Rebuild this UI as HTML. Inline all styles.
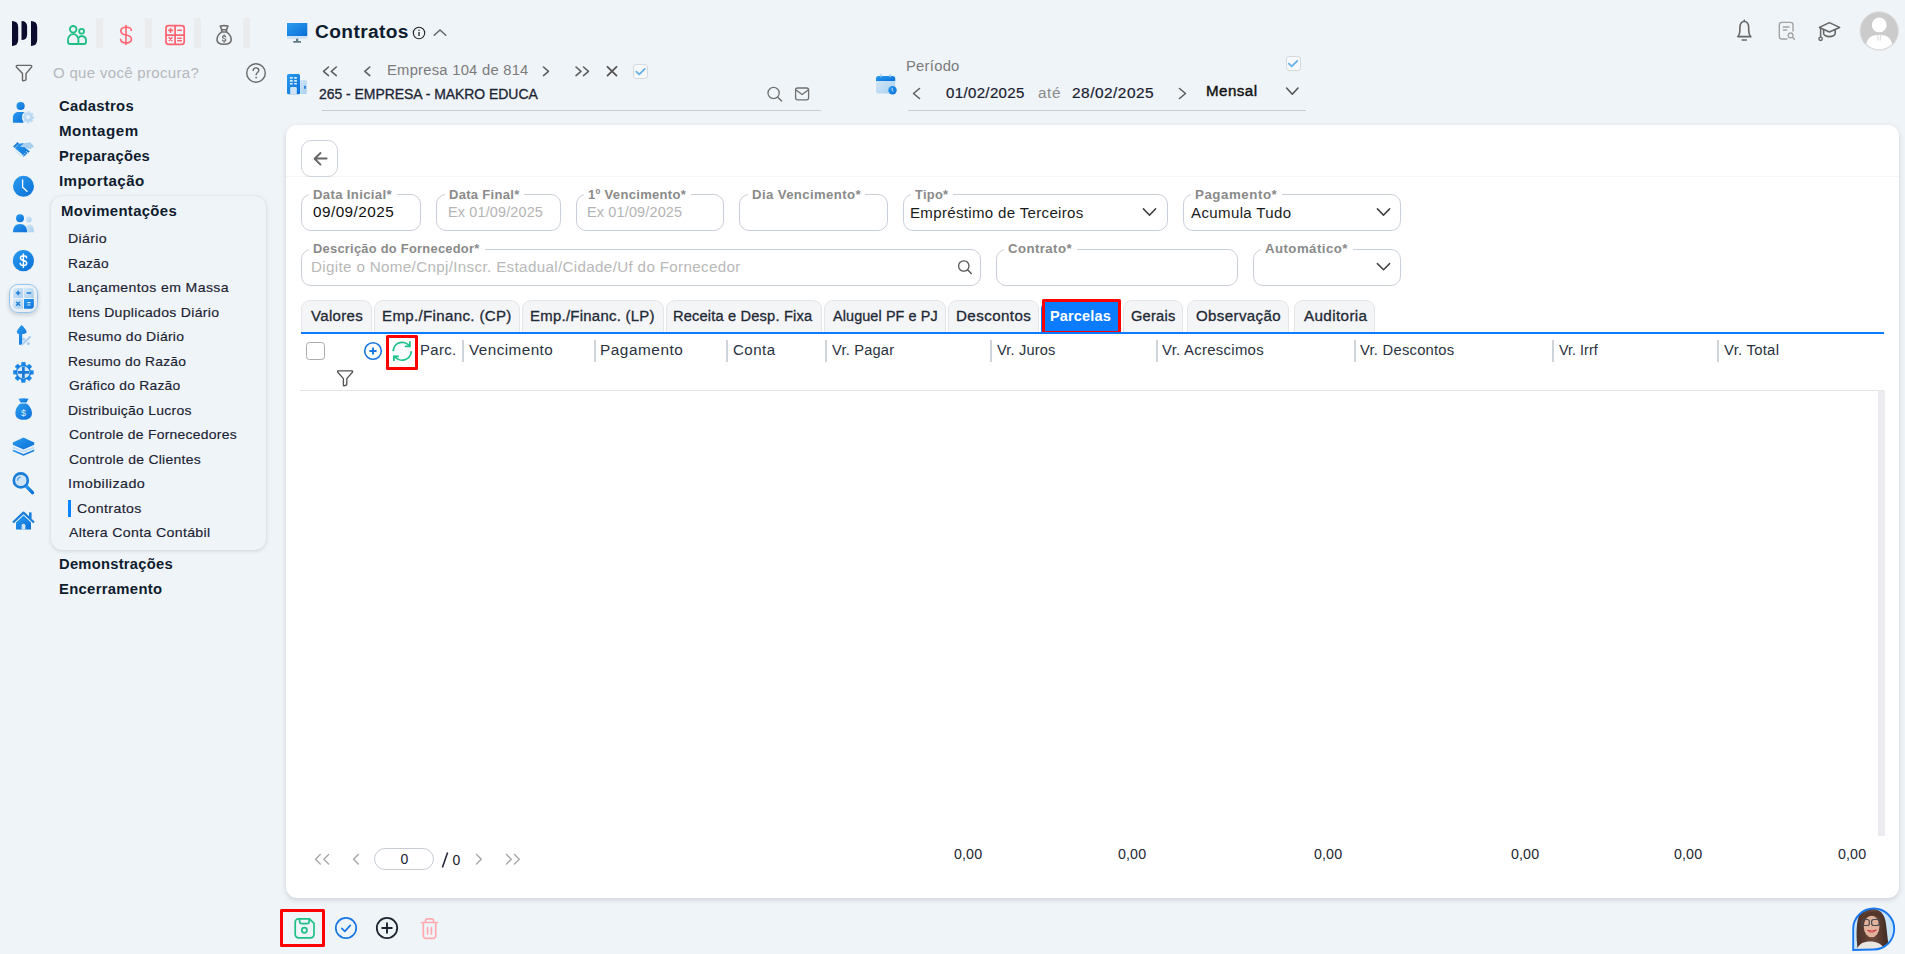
<!DOCTYPE html>
<html><head><meta charset="utf-8"><style>
html,body{margin:0;padding:0;}
body{width:1905px;height:954px;overflow:hidden;position:relative;background:#eff4f8;font-family:"Liberation Sans", sans-serif;}
.t{position:absolute;white-space:nowrap;}
svg{overflow:visible}
</style></head><body>
<div style="position:absolute;left:96px;top:18px;width:7px;height:30px;background:#ebeced;"></div>
<div style="position:absolute;left:145px;top:18px;width:7px;height:30px;background:#ebeced;"></div>
<div style="position:absolute;left:194px;top:18px;width:7px;height:30px;background:#ebeced;"></div>
<div style="position:absolute;left:243px;top:18px;width:7px;height:30px;background:#ebeced;"></div>
<div style="position:absolute;left:51px;top:196px;width:215px;height:354px;background:#eff4f8;border-radius:11px;box-shadow:0 1px 4px rgba(0,0,0,0.13),0 0 1px rgba(0,0,0,0.10);"></div>
<div style="position:absolute;left:68px;top:500px;width:3px;height:17px;background:#0a84ff;"></div>
<div style="position:absolute;left:322px;top:110px;width:499px;height:1px;background:#c9cdd2;"></div>
<div style="position:absolute;left:908px;top:110px;width:398px;height:1px;background:#c9cdd2;"></div>
<div style="position:absolute;left:286px;top:125px;width:1613px;height:773px;background:#fff;border-radius:11px;box-shadow:0 2px 5px rgba(30,40,60,0.16);"></div>
<div style="position:absolute;left:286px;top:176px;width:1613px;height:1px;background:#f4f5f7;"></div>
<div style="position:absolute;left:301px;top:140px;width:37px;height:37px;background:#fff;border:1px solid #cdd3db;border-radius:10px;box-sizing:border-box;"></div>
<div style="position:absolute;left:301px;top:194px;width:120px;height:37px;border:1px solid #c9cfd8;border-radius:10px;box-sizing:border-box;background:#fff;"></div>
<div style="position:absolute;left:309px;top:193px;width:88px;height:3px;background:#fff;"></div>
<div style="position:absolute;left:436px;top:194px;width:125px;height:37px;border:1px solid #c9cfd8;border-radius:10px;box-sizing:border-box;background:#fff;"></div>
<div style="position:absolute;left:445px;top:193px;width:79px;height:3px;background:#fff;"></div>
<div style="position:absolute;left:576px;top:194px;width:148px;height:37px;border:1px solid #c9cfd8;border-radius:10px;box-sizing:border-box;background:#fff;"></div>
<div style="position:absolute;left:584px;top:193px;width:107px;height:3px;background:#fff;"></div>
<div style="position:absolute;left:739px;top:194px;width:149px;height:37px;border:1px solid #c9cfd8;border-radius:10px;box-sizing:border-box;background:#fff;"></div>
<div style="position:absolute;left:748px;top:193px;width:117px;height:3px;background:#fff;"></div>
<div style="position:absolute;left:903px;top:194px;width:265px;height:37px;border:1px solid #c9cfd8;border-radius:10px;box-sizing:border-box;background:#fff;"></div>
<div style="position:absolute;left:911px;top:193px;width:42px;height:3px;background:#fff;"></div>
<div style="position:absolute;left:1183px;top:194px;width:218px;height:37px;border:1px solid #c9cfd8;border-radius:10px;box-sizing:border-box;background:#fff;"></div>
<div style="position:absolute;left:1191px;top:193px;width:91px;height:3px;background:#fff;"></div>
<div style="position:absolute;left:301px;top:249px;width:680px;height:37px;border:1px solid #c9cfd8;border-radius:10px;box-sizing:border-box;background:#fff;"></div>
<div style="position:absolute;left:309px;top:248px;width:176px;height:3px;background:#fff;"></div>
<div style="position:absolute;left:996px;top:249px;width:242px;height:37px;border:1px solid #c9cfd8;border-radius:10px;box-sizing:border-box;background:#fff;"></div>
<div style="position:absolute;left:1004px;top:248px;width:73px;height:3px;background:#fff;"></div>
<div style="position:absolute;left:1253px;top:249px;width:148px;height:37px;border:1px solid #c9cfd8;border-radius:10px;box-sizing:border-box;background:#fff;"></div>
<div style="position:absolute;left:1261px;top:248px;width:92px;height:3px;background:#fff;"></div>
<div style="position:absolute;left:301px;top:300px;width:70.80000000000001px;height:33px;background:#f4f5f6;border:1px solid #e4e6e9;border-bottom:none;border-radius:9px 9px 0 0;box-sizing:border-box;"></div>
<div style="position:absolute;left:374.2px;top:300px;width:145.59999999999997px;height:33px;background:#f4f5f6;border:1px solid #e4e6e9;border-bottom:none;border-radius:9px 9px 0 0;box-sizing:border-box;"></div>
<div style="position:absolute;left:522.4px;top:300px;width:141.20000000000005px;height:33px;background:#f4f5f6;border:1px solid #e4e6e9;border-bottom:none;border-radius:9px 9px 0 0;box-sizing:border-box;"></div>
<div style="position:absolute;left:666px;top:300px;width:155.60000000000002px;height:33px;background:#f4f5f6;border:1px solid #e4e6e9;border-bottom:none;border-radius:9px 9px 0 0;box-sizing:border-box;"></div>
<div style="position:absolute;left:824.2px;top:300px;width:121.5px;height:33px;background:#f4f5f6;border:1px solid #e4e6e9;border-bottom:none;border-radius:9px 9px 0 0;box-sizing:border-box;"></div>
<div style="position:absolute;left:948.3px;top:300px;width:90.29999999999995px;height:33px;background:#f4f5f6;border:1px solid #e4e6e9;border-bottom:none;border-radius:9px 9px 0 0;box-sizing:border-box;"></div>
<div style="position:absolute;left:1040.5px;top:300px;width:80.5px;height:33px;background:#0b7cff;border-radius:9px 9px 0 0;"></div>
<div style="position:absolute;left:1042px;top:299px;width:78.5px;height:35px;background:#0b7cff;border:3px solid #ff0000;border-radius:1.5px;box-sizing:border-box;"></div>
<div style="position:absolute;left:1122.8px;top:300px;width:60.200000000000045px;height:33px;background:#f4f5f6;border:1px solid #e4e6e9;border-bottom:none;border-radius:9px 9px 0 0;box-sizing:border-box;"></div>
<div style="position:absolute;left:1186.8px;top:300px;width:102.5px;height:33px;background:#f4f5f6;border:1px solid #e4e6e9;border-bottom:none;border-radius:9px 9px 0 0;box-sizing:border-box;"></div>
<div style="position:absolute;left:1294px;top:300px;width:81px;height:33px;background:#f4f5f6;border:1px solid #e4e6e9;border-bottom:none;border-radius:9px 9px 0 0;box-sizing:border-box;"></div>
<div style="position:absolute;left:301px;top:332px;width:1583px;height:2px;background:#0b7bff;"></div>
<div style="position:absolute;left:306px;top:342px;width:19px;height:18px;border:1px solid #a9abae;border-radius:3.5px;box-sizing:border-box;background:#fff;"></div>
<div style="position:absolute;left:386px;top:335px;width:32px;height:35px;border:3px solid #ff0000;border-radius:1.5px;box-sizing:border-box;"></div>
<div style="position:absolute;left:462px;top:340px;width:2px;height:22px;background:#cfd4da;"></div>
<div style="position:absolute;left:594px;top:340px;width:2px;height:22px;background:#cfd4da;"></div>
<div style="position:absolute;left:726px;top:340px;width:2px;height:22px;background:#cfd4da;"></div>
<div style="position:absolute;left:825px;top:340px;width:2px;height:22px;background:#cfd4da;"></div>
<div style="position:absolute;left:990px;top:340px;width:2px;height:22px;background:#cfd4da;"></div>
<div style="position:absolute;left:1156px;top:340px;width:2px;height:22px;background:#cfd4da;"></div>
<div style="position:absolute;left:1354px;top:340px;width:2px;height:22px;background:#cfd4da;"></div>
<div style="position:absolute;left:1552px;top:340px;width:2px;height:22px;background:#cfd4da;"></div>
<div style="position:absolute;left:1716.5px;top:340px;width:2.0px;height:22px;background:#cfd4da;"></div>
<div style="position:absolute;left:300px;top:390px;width:1584px;height:1px;background:#e3e4e6;"></div>
<div style="position:absolute;left:1878px;top:391px;width:7px;height:445px;background:#ececf0;"></div>
<div style="position:absolute;left:374px;top:848px;width:60px;height:22px;border:1px solid #c6cbd2;border-radius:11px;box-sizing:border-box;"></div>
<svg style="position:absolute;left:0px;top:0px;" width="1" height="1" viewBox="0 0 1 1"><path d="M447.6,852.4 L442.4,867.4" stroke="#1a2030" stroke-width="1.5"/></svg>
<svg style="position:absolute;left:0px;top:0px;" width="50" height="60" viewBox="0 0 50 60"><path d="M12,21 Q18.2,21 18.2,27.2 V39.8 Q18.2,46 12,46 Z" fill="#0c0b2e"/><path d="M21.5,21 Q27.1,21 27.1,26.6 V34.4 Q27.1,40 21.5,40 Z" fill="#0c0b2e"/><path d="M31,21 Q37.2,21 37.2,27.2 V39.8 Q37.2,46 31,46 Z" fill="#0c0b2e"/></svg>
<svg style="position:absolute;left:60px;top:18px;" width="34" height="34" viewBox="0 0 34 34"><g fill="none" stroke="#1dbf84" stroke-width="1.8" stroke-linecap="round" stroke-linejoin="round"><circle cx="13.2" cy="11.3" r="3.3"/><path d="M8,23.5 V21.6 a5.2,5.4 0 0 1 10.4,0 V26 H10.3 A2.3,2.3 0 0 1 8,23.7 Z"/><circle cx="21.6" cy="13.3" r="2.4"/><path d="M18.4,26 H24 A2,2 0 0 0 26,24 V22.3 a4,4 0 0 0 -7.2,-2.6"/></g></svg>
<svg style="position:absolute;left:110px;top:18px;" width="34" height="34" viewBox="0 0 34 34"><g fill="none" stroke="#ff6470" stroke-width="1.6" stroke-linecap="round"><path d="M16,7.5 V26.5"/><path d="M21.3,12.5 C21.3,10 19,9.3 16,9.3 C12.6,9.3 10.8,10.8 10.8,13 C10.8,15.6 13.3,16.4 16,17 C19,17.6 21.4,18.6 21.4,21.3 C21.4,23.7 19.3,24.9 16,24.9 C12.8,24.9 10.6,23.8 10.6,21.3"/></g></svg>
<svg style="position:absolute;left:160px;top:18px;" width="30" height="34" viewBox="0 0 30 34"><g fill="none" stroke="#ff6470" stroke-width="1.75"><rect x="6" y="7.7" width="18.2" height="18.6" rx="2.6"/><path d="M15.1,7.7 V26.3 M6,17 H24.2"/></g><g stroke="#ff6470" stroke-width="1.6" stroke-linecap="round"><path d="M10.6,10.5 V14.2 M8.7,12.35 H12.5"/><path d="M17.8,12.3 H21.3"/><path d="M9.2,19.7 L11.9,22.5 M11.9,19.7 L9.2,22.5"/><path d="M17.8,20.3 H21.3 M17.8,22.7 H21.3"/></g></svg>
<svg style="position:absolute;left:210px;top:18px;" width="30" height="34" viewBox="0 0 30 34"><g fill="none" stroke="#6f6f6f" stroke-width="1.6" stroke-linejoin="round" stroke-linecap="round"><path d="M10.3,8.1 Q14.1,7.1 17.9,8.1 L16.5,11.7 H11.7 Z"/><path d="M11.7,11.7 V14 H16.5 V11.7"/><path d="M11.5,14.2 C8.4,16.2 7,19.2 7,21.8 C7,25 9.7,26.3 14.1,26.3 C18.5,26.3 21.2,25 21.2,21.8 C21.2,19.2 19.8,16.2 16.7,14.2"/></g><g fill="none" stroke="#6f6f6f" stroke-width="1.2" stroke-linecap="round"><path d="M15.7,18.8 C15.5,18 14.9,17.8 14.1,17.8 C13.2,17.8 12.5,18.3 12.5,19.1 C12.5,20 13.3,20.3 14.1,20.5 C15,20.7 15.8,21 15.8,21.9 C15.8,22.7 15.1,23.2 14.1,23.2 C13.2,23.2 12.5,22.8 12.4,22"/><path d="M14.1,16.8 V17.8 M14.1,23.2 V24.2"/></g></svg>
<svg style="position:absolute;left:10px;top:58px;" width="30" height="30" viewBox="0 0 30 30"><path d="M7.2,7.4 H20.8 A1,1 0 0 1 21.6,9 L16,15.6 V21.4 A0.8,0.8 0 0 1 15.5,22.1 L13.2,22.9 A0.6,0.6 0 0 1 12.5,22.3 V15.6 L6.4,9 A1,1 0 0 1 7.2,7.4 Z" fill="none" stroke="#666" stroke-width="1.4" stroke-linejoin="round"/></svg>
<svg style="position:absolute;left:240px;top:58px;" width="30" height="30" viewBox="0 0 30 30"><circle cx="16" cy="15" r="9.3" fill="none" stroke="#6a6a6a" stroke-width="1.4"/><path d="M13.2,12.6 C13.2,10.8 14.5,9.9 16,9.9 C17.6,9.9 18.8,10.9 18.8,12.4 C18.8,14.4 16.1,14.6 16.1,16.8" fill="none" stroke="#6a6a6a" stroke-width="1.4" stroke-linecap="round"/><circle cx="16.1" cy="19.6" r="0.9" fill="#6a6a6a"/></svg>
<svg width="0" height="0" style="position:absolute"><defs><linearGradient id="bg1" x1="0" y1="0" x2="1" y2="1"><stop offset="0" stop-color="#2b9cf0"/><stop offset="1" stop-color="#0a6fd6"/></linearGradient><linearGradient id="bg2" x1="0" y1="0" x2="1" y2="1"><stop offset="0" stop-color="#d6e9f8"/><stop offset="1" stop-color="#a9cfef"/></linearGradient></defs></svg>
<svg style="position:absolute;left:8px;top:98px;" width="30" height="30" viewBox="0 0 30 30"><circle cx="12.6" cy="8" r="4.1" fill="url(#bg1)"/><path d="M4.9,24.8 V19.5 C4.9,15.8 7.6,13.9 10.8,13.9 H16.6 C14.6,15.5 13.6,18 14,20.8 L15.6,24.8 Z" fill="url(#bg1)"/><g transform="translate(20.3,19.3)"><circle r="4.5" fill="url(#bg2)"/><rect x="-1.4" y="-6.2" width="2.8" height="3" rx="0.6" fill="url(#bg2)" transform="rotate(0)"/><rect x="-1.4" y="-6.2" width="2.8" height="3" rx="0.6" fill="url(#bg2)" transform="rotate(45)"/><rect x="-1.4" y="-6.2" width="2.8" height="3" rx="0.6" fill="url(#bg2)" transform="rotate(90)"/><rect x="-1.4" y="-6.2" width="2.8" height="3" rx="0.6" fill="url(#bg2)" transform="rotate(135)"/><rect x="-1.4" y="-6.2" width="2.8" height="3" rx="0.6" fill="url(#bg2)" transform="rotate(180)"/><rect x="-1.4" y="-6.2" width="2.8" height="3" rx="0.6" fill="url(#bg2)" transform="rotate(225)"/><rect x="-1.4" y="-6.2" width="2.8" height="3" rx="0.6" fill="url(#bg2)" transform="rotate(270)"/><rect x="-1.4" y="-6.2" width="2.8" height="3" rx="0.6" fill="url(#bg2)" transform="rotate(315)"/><circle r="1.7" fill="#e9f2fa"/></g></svg>
<svg style="position:absolute;left:8px;top:135px;" width="32" height="28" viewBox="0 0 32 28"><g stroke="#d6e7f6" stroke-width="1.3" stroke-linecap="round"><path d="M7.6,15.6 L9.6,17.6"/><path d="M9.2,17.4 L11.2,19.4"/><path d="M10.8,19 L12.8,21"/></g><path d="M12.5,10 L16,8.2 L21,7.6 L25,11.8 L22,14.4 L16.5,12.2 Z" fill="#a9cfee"/><path d="M21.9,7.1 L26,11.3 L24.5,12.8 L20.4,8.6 Z" fill="#a9cfee"/><path d="M7,13.2 L10.9,8.8 C12.5,8.2 14.5,8.1 15.9,8.4 L12.3,11.3 L16.7,12.3 L21.9,16.4 L19.2,18.5 L17.4,20.6 L15.3,21.8 L13.8,19 L9.7,15.5 Z" fill="url(#bg1)"/><path d="M5.1,11.4 L9.5,7.1 L11,8.6 L6.6,12.9 Z" fill="#1f7fd8"/><g stroke="#eff4f8" stroke-width="0.8"><path d="M18,16.2 L20,18"/><path d="M16.4,17.9 L18.2,19.7"/><path d="M14.8,19.4 L16.3,21"/></g></svg>
<svg style="position:absolute;left:8px;top:170px;" width="30" height="30" viewBox="0 0 30 30"><circle cx="15.5" cy="16.3" r="10.5" fill="url(#bg1)"/><path d="M14.6,10 V17.2 L19,21.2" fill="none" stroke="#fff" stroke-width="1.3" stroke-linecap="round"/></svg>
<svg style="position:absolute;left:8px;top:208px;" width="30" height="30" viewBox="0 0 30 30"><circle cx="20.8" cy="11.5" r="2.9" fill="url(#bg2)"/><path d="M16,24.3 C16.5,19.5 18.5,16.5 21.5,16.5 C24.2,16.5 25.8,19 25.8,22 V24.3 Z" fill="url(#bg2)"/><circle cx="12" cy="10.2" r="4" fill="url(#bg1)"/><path d="M5,24.3 C5,18.8 7.5,16 12,16 C16.5,16 19,18.8 19,24.3 Z" fill="url(#bg1)"/></svg>
<svg style="position:absolute;left:8px;top:245px;" width="30" height="30" viewBox="0 0 30 30"><circle cx="15.4" cy="15.7" r="10.6" fill="url(#bg1)"/><path d="M15.4,9 V22.4 M18.6,12.8 C18.6,11.5 17.3,10.8 15.5,10.8 C13.6,10.8 12.4,11.7 12.4,13 C12.4,14.6 13.9,15.1 15.5,15.5 C17.3,15.9 18.7,16.5 18.7,18.2 C18.7,19.6 17.4,20.5 15.5,20.5 C13.5,20.5 12.2,19.7 12.2,18.3" fill="none" stroke="#fff" stroke-width="1.4" stroke-linecap="round"/></svg>
<div style="position:absolute;left:9px;top:284px;width:29px;height:29px;border:1.5px solid #93c6ee;border-radius:9px;box-sizing:border-box;background:linear-gradient(135deg,#f3f6f9,#e6ebf0);box-shadow:0 2px 4px rgba(0,0,0,0.16);"></div>
<svg style="position:absolute;left:8px;top:283px;" width="30" height="30" viewBox="0 0 30 30"><path d="M5.2,8 A3,3 0 0 1 8.2,5 H15 V15 H5.2 Z" fill="url(#bg2)"/><path d="M16,5 H22.8 A3,3 0 0 1 25.8,8 V15 H16 Z" fill="url(#bg2)"/><path d="M5.2,16 H15 V25.8 H8.2 A3,3 0 0 1 5.2,22.8 Z" fill="url(#bg2)"/><path d="M16,16 H25.8 V22.8 A3,3 0 0 1 22.8,25.8 H16 Z" fill="url(#bg1)"/><g stroke="#1f7fd8" stroke-width="1.5" stroke-linecap="round"><path d="M10.1,8.3 V11.7 M8.4,10 H11.8"/><path d="M19.2,10 H22.6"/><path d="M8.6,19.3 L11.6,22.3 M11.6,19.3 L8.6,22.3"/></g><path d="M19.2,19.6 H22.6 M19.2,22 H22.6" stroke="#cfe6fa" stroke-width="1.2"/></svg>
<svg style="position:absolute;left:8px;top:320px;" width="30" height="30" viewBox="0 0 30 30"><path d="M13.6,4.9 C12,6.5 8.8,10 8.8,12 C8.8,13.3 9.8,14 11,14 V24.7 H14.2 V14 C15.8,14 18.6,13.5 18.6,12 C18.6,10 15.5,6.5 13.6,4.9 Z" fill="url(#bg1)"/><path d="M14,24.6 L22,17" stroke="#a8cdee" stroke-width="2" stroke-linecap="round"/><circle cx="15.6" cy="19.2" r="1.5" fill="#a8cdee"/><circle cx="20.3" cy="23.4" r="1.5" fill="#a8cdee"/></svg>
<svg style="position:absolute;left:8px;top:357px;" width="30" height="30" viewBox="0 0 30 30"><g transform="translate(15.4,15.4)"><circle r="7.7" fill="url(#bg1)"/><rect x="-2.2" y="-10.3" width="4.4" height="4" rx="0.9" fill="url(#bg1)" transform="rotate(0)"/><rect x="-2.2" y="-10.3" width="4.4" height="4" rx="0.9" fill="url(#bg1)" transform="rotate(45)"/><rect x="-2.2" y="-10.3" width="4.4" height="4" rx="0.9" fill="url(#bg1)" transform="rotate(90)"/><rect x="-2.2" y="-10.3" width="4.4" height="4" rx="0.9" fill="url(#bg1)" transform="rotate(135)"/><rect x="-2.2" y="-10.3" width="4.4" height="4" rx="0.9" fill="url(#bg1)" transform="rotate(180)"/><rect x="-2.2" y="-10.3" width="4.4" height="4" rx="0.9" fill="url(#bg1)" transform="rotate(225)"/><rect x="-2.2" y="-10.3" width="4.4" height="4" rx="0.9" fill="url(#bg1)" transform="rotate(270)"/><rect x="-2.2" y="-10.3" width="4.4" height="4" rx="0.9" fill="url(#bg1)" transform="rotate(315)"/><circle r="6.2" fill="#d5e7f7"/><path d="M0,-5.6 V5.6 M-5.6,0 H5.6" stroke="#1a78d6" stroke-width="2.7"/></g></svg>
<svg style="position:absolute;left:8px;top:394px;" width="30" height="30" viewBox="0 0 30 30"><path d="M10.5,4.8 Q15.5,3.6 20.6,4.8 L18.4,8.6 H12.6 Z" fill="url(#bg1)"/><path d="M12.6,9.6 H18.4 C22.5,12.2 23.9,16.2 23.9,19.5 C23.9,23.5 20.5,25.8 15.5,25.8 C10.5,25.8 7.4,23.5 7.4,19.5 C7.4,16.2 8.6,12.2 12.6,9.6 Z" fill="url(#bg1)"/><text x="15.6" y="22" font-family="Liberation Sans" font-size="9" fill="#dbeefc" text-anchor="middle">$</text></svg>
<svg style="position:absolute;left:8px;top:431px;" width="30" height="30" viewBox="0 0 30 30"><path d="M4.8,18.5 L15.5,23 L26.2,18.5 V20.2 L15.5,24.8 L4.8,20.2 Z" fill="url(#bg1)"/><path d="M4.8,15.5 L15.5,20 L26.2,15.5 L26.2,17.2 L15.5,21.6 L4.8,17.2 Z" fill="#b9d9f4"/><path d="M15.5,6.6 L26.2,11.5 V13.8 L15.5,18.4 L4.8,13.8 V11.5 Z" fill="url(#bg1)"/></svg>
<svg style="position:absolute;left:8px;top:467px;" width="30" height="30" viewBox="0 0 30 30"><path d="M18,19 L24.5,25.6" stroke="url(#bg1)" stroke-width="3.4" stroke-linecap="round"/><circle cx="12.8" cy="13.4" r="7" fill="#cfe4f7" stroke="#1a7ed8" stroke-width="2.6"/><path d="M9.6,13.8 A3.6,3.6 0 0 1 12.6,10.1" stroke="#3c98e4" stroke-width="1.2" fill="none"/></svg>
<svg style="position:absolute;left:8px;top:507px;" width="30" height="30" viewBox="0 0 30 30"><path d="M5,15.5 L15.5,5.6 L26,15.5" fill="none" stroke="#1a7ed8" stroke-width="2.2" stroke-linejoin="round"/><rect x="21" y="5.4" width="2.6" height="6" fill="#1a7ed8"/><path d="M8,15.4 L15.5,8.4 L23,15.4 V22.5 H8 Z" fill="url(#bg1)"/><path d="M13.6,22.5 V18.6 A1.9,1.9 0 0 1 17.4,18.6 V22.5 Z" fill="#cfe4f7"/></svg>
<svg style="position:absolute;left:284px;top:20px;" width="26" height="26" viewBox="0 0 26 26"><rect x="3" y="3" width="20.3" height="13" fill="url(#bg1)"/><rect x="3" y="16" width="20.3" height="2.8" fill="#cfe2f5"/><path d="M12,18.8 H14.3 V21 H17 V22.8 H9.3 V21 H12 Z" fill="#5d7a85"/></svg>
<svg style="position:absolute;left:408px;top:22px;" width="22" height="22" viewBox="0 0 22 22"><circle cx="11" cy="11" r="5.7" fill="none" stroke="#222" stroke-width="1.1"/><path d="M11,10 V14" stroke="#222" stroke-width="1.3"/><circle cx="11" cy="8.2" r="0.75" fill="#222"/></svg>
<svg style="position:absolute;left:428px;top:22px;" width="24" height="20" viewBox="0 0 24 20"><path d="M6.2,13.2 L12,8 L17.8,13.2" fill="none" stroke="#666" stroke-width="1.5" stroke-linecap="round"/></svg>
<svg style="position:absolute;left:284px;top:71px;" width="26" height="26" viewBox="0 0 26 26"><rect x="14" y="9" width="8.8" height="14" rx="1.6" fill="url(#bg2)"/><rect x="3" y="3" width="13" height="20.3" rx="1.6" fill="url(#bg1)"/><path d="M6.2,23.3 V17.2 A1.3,1.3 0 0 1 7.5,15.9 H11.5 A1.3,1.3 0 0 1 12.8,17.2 V23.3 Z" fill="#cfe3f5"/><rect x="5.9" y="6.1" width="2.9" height="1.6" rx="0.5" fill="#d9ebfa"/><rect x="5.9" y="9.1" width="2.9" height="1.6" rx="0.5" fill="#d9ebfa"/><rect x="5.9" y="11.9" width="2.9" height="1.6" rx="0.5" fill="#d9ebfa"/><rect x="10.1" y="6.1" width="2.9" height="1.6" rx="0.5" fill="#d9ebfa"/><rect x="10.1" y="9.1" width="2.9" height="1.6" rx="0.5" fill="#d9ebfa"/><rect x="10.1" y="11.9" width="2.9" height="1.6" rx="0.5" fill="#d9ebfa"/><rect x="20" y="14.8" width="1.9" height="3" fill="#2a86dc"/></svg>
<svg style="position:absolute;left:0px;top:0px;" width="1" height="1" viewBox="0 0 1 1"><path d="M328.5,67 L323.5,71.3 L328.5,75.6" fill="none" stroke="#5f5f5f" stroke-width="1.6" stroke-linecap="round" stroke-linejoin="round"/><path d="M336.3,67 L331.3,71.3 L336.3,75.6" fill="none" stroke="#5f5f5f" stroke-width="1.6" stroke-linecap="round" stroke-linejoin="round"/></svg>
<svg style="position:absolute;left:0px;top:0px;" width="1" height="1" viewBox="0 0 1 1"><path d="M369.8,67 L364.8,71.3 L369.8,75.6" fill="none" stroke="#5f5f5f" stroke-width="1.6" stroke-linecap="round" stroke-linejoin="round"/></svg>
<svg style="position:absolute;left:0px;top:0px;" width="1" height="1" viewBox="0 0 1 1"><path d="M543.5,67 L548.5,71.3 L543.5,75.6" fill="none" stroke="#5f5f5f" stroke-width="1.6" stroke-linecap="round" stroke-linejoin="round"/></svg>
<svg style="position:absolute;left:0px;top:0px;" width="1" height="1" viewBox="0 0 1 1"><path d="M576,67 L581,71.3 L576,75.6" fill="none" stroke="#5f5f5f" stroke-width="1.6" stroke-linecap="round" stroke-linejoin="round"/><path d="M583.5,67 L588.5,71.3 L583.5,75.6" fill="none" stroke="#5f5f5f" stroke-width="1.6" stroke-linecap="round" stroke-linejoin="round"/></svg>
<svg style="position:absolute;left:0px;top:0px;" width="1" height="1" viewBox="0 0 1 1"><path d="M607.5,66.8 L616.5,75.6 M616.5,66.8 L607.5,75.6" stroke="#555" stroke-width="1.8" stroke-linecap="round"/></svg>
<div style="position:absolute;left:633px;top:64px;width:15px;height:15px;border:1px solid #d6d9dd;border-radius:3px;box-sizing:border-box;background:#f6f8fa;"></div>
<svg style="position:absolute;left:0px;top:0px;" width="1" height="1" viewBox="0 0 1 1"><path d="M636.3,71.6 L639.2,74.3 L644.8,68.8" fill="none" stroke="#62aee9" stroke-width="1.7" stroke-linecap="round" stroke-linejoin="round"/></svg>
<div style="position:absolute;left:1285.5px;top:56px;width:15.0px;height:15px;border:1px solid #d6d9dd;border-radius:3px;box-sizing:border-box;background:#f6f8fa;"></div>
<svg style="position:absolute;left:0px;top:0px;" width="1" height="1" viewBox="0 0 1 1"><path d="M1288.8,63.6 L1291.7,66.3 L1297.3,60.8" fill="none" stroke="#62aee9" stroke-width="1.7" stroke-linecap="round" stroke-linejoin="round"/></svg>
<svg style="position:absolute;left:0px;top:0px;" width="1" height="1" viewBox="0 0 1 1"><circle cx="773.6" cy="93" r="5.6" fill="none" stroke="#707070" stroke-width="1.3"/><path d="M777.8,97.2 L781.6,101" stroke="#707070" stroke-width="1.4" stroke-linecap="round"/></svg>
<svg style="position:absolute;left:0px;top:0px;" width="1" height="1" viewBox="0 0 1 1"><rect x="795.6" y="88" width="13" height="11.8" rx="2" fill="none" stroke="#707070" stroke-width="1.3"/><path d="M796,90 L802.1,94.6 L808.2,90" fill="none" stroke="#707070" stroke-width="1.3" stroke-linejoin="round"/></svg>
<svg style="position:absolute;left:872px;top:70px;" width="28" height="28" viewBox="0 0 28 28"><rect x="4" y="6" width="19.2" height="17.5" rx="2.5" fill="url(#bg2)"/><path d="M4,11 V8.5 A2.5,2.5 0 0 1 6.5,6 H20.7 A2.5,2.5 0 0 1 23.2,8.5 V11 Z" fill="url(#bg1)"/><rect x="8.4" y="4.2" width="1.4" height="3" fill="#9cc6ec"/><rect x="17.4" y="4.2" width="1.4" height="3" fill="#9cc6ec"/><circle cx="20.5" cy="20.3" r="4.2" fill="url(#bg1)"/><path d="M20.2,18 V20.5 L21.6,21.8" stroke="#cfe4f7" stroke-width="0.9" fill="none"/></svg>
<svg style="position:absolute;left:0px;top:0px;" width="1" height="1" viewBox="0 0 1 1"><path d="M919.5,88.5 L913.5,93.5 L919.5,98.5" fill="none" stroke="#5f5f5f" stroke-width="1.6" stroke-linecap="round" stroke-linejoin="round"/></svg>
<svg style="position:absolute;left:0px;top:0px;" width="1" height="1" viewBox="0 0 1 1"><path d="M1179.5,88.5 L1185.5,93.5 L1179.5,98.5" fill="none" stroke="#5f5f5f" stroke-width="1.6" stroke-linecap="round" stroke-linejoin="round"/></svg>
<svg style="position:absolute;left:0px;top:0px;" width="1" height="1" viewBox="0 0 1 1"><path d="M1286.6,88 L1292.3,94.2 L1298,88" fill="none" stroke="#555" stroke-width="1.6" stroke-linecap="round" stroke-linejoin="round"/></svg>
<svg style="position:absolute;left:0px;top:0px;" width="1" height="1" viewBox="0 0 1 1"><path d="M1737.8,36.6 C1739.6,35 1739.9,33.2 1739.9,30.5 V27.8 C1739.9,24 1741.8,21.6 1744.3,21.3 C1746.8,21.6 1748.7,24 1748.7,27.8 V30.5 C1748.7,33.2 1749,35 1750.8,36.6 Z" fill="none" stroke="#666" stroke-width="1.6" stroke-linejoin="round"/><path d="M1744.3,19.6 V21.3" stroke="#666" stroke-width="1.3"/><path d="M1742.4,40 H1746.2" stroke="#666" stroke-width="1.7" stroke-linecap="round"/></svg>
<svg style="position:absolute;left:0px;top:0px;" width="1" height="1" viewBox="0 0 1 1"><path d="M1787.5,39 H1781.9 A2.6,2.6 0 0 1 1779.3,36.4 V25 A2.6,2.6 0 0 1 1781.9,22.4 H1790.4 A2.6,2.6 0 0 1 1793,25 V31.5" fill="none" stroke="#a3a3a3" stroke-width="1.4"/><path d="M1782.8,27 H1789.6 M1782.8,30 H1787.2" stroke="#a3a3a3" stroke-width="1.3"/><circle cx="1790.6" cy="35.4" r="2.4" fill="none" stroke="#a3a3a3" stroke-width="1.3"/><path d="M1792.4,37.2 L1794.4,39.3" stroke="#a3a3a3" stroke-width="1.4" stroke-linecap="round"/></svg>
<svg style="position:absolute;left:0px;top:0px;" width="1" height="1" viewBox="0 0 1 1"><path d="M1819.4,27.4 L1829.4,22.6 L1839.6,27.4 L1829.4,32 Z" fill="none" stroke="#666" stroke-width="1.6" stroke-linejoin="round"/><path d="M1823.6,29.6 V33.6 C1823.6,35.3 1826.5,36.6 1829.4,36.6 C1832.3,36.6 1835.2,35.3 1835.2,33.6 V29.6" fill="none" stroke="#666" stroke-width="1.6"/><path d="M1820.6,28 V37" stroke="#666" stroke-width="1.5"/><circle cx="1820.6" cy="38.8" r="1.7" fill="none" stroke="#666" stroke-width="1.4"/></svg>
<svg style="position:absolute;left:1856px;top:8px;" width="46" height="46" viewBox="0 0 46 46"><circle cx="23.2" cy="23" r="19.3" fill="#cbcbcb" stroke="#e2e2e2" stroke-width="1"/><defs><clipPath id="avc"><circle cx="23.2" cy="23" r="18.4"/></clipPath></defs><g clip-path="url(#avc)" fill="#fff"><circle cx="23.2" cy="16.9" r="7.4"/><path d="M9.8,42 C9.4,30.5 15,26.8 23.2,26.8 C31.4,26.8 37,30.5 36.6,42 Z"/></g><path d="M21.6,27 L22.3,32.5 M24.8,27 L24.1,32.5" stroke="#d6d6d6" stroke-width="0.9" fill="none"/></svg>
<svg style="position:absolute;left:0px;top:0px;" width="1" height="1" viewBox="0 0 1 1"><path d="M326.6,158.5 H314.8 M320.5,153 L314.6,158.8 L320.5,164.6" fill="none" stroke="#666" stroke-width="1.9" stroke-linecap="round" stroke-linejoin="round"/></svg>
<svg style="position:absolute;left:0px;top:0px;" width="1" height="1" viewBox="0 0 1 1"><path d="M1143.4,208.9 L1149.5,215.1 L1155.6,208.9" fill="none" stroke="#444" stroke-width="1.5" stroke-linecap="round" stroke-linejoin="round"/></svg>
<svg style="position:absolute;left:0px;top:0px;" width="1" height="1" viewBox="0 0 1 1"><path d="M1377.4,208.9 L1383.5,215.1 L1389.6,208.9" fill="none" stroke="#444" stroke-width="1.5" stroke-linecap="round" stroke-linejoin="round"/></svg>
<svg style="position:absolute;left:0px;top:0px;" width="1" height="1" viewBox="0 0 1 1"><path d="M1377.4,263.59999999999997 L1383.5,269.8 L1389.6,263.59999999999997" fill="none" stroke="#444" stroke-width="1.5" stroke-linecap="round" stroke-linejoin="round"/></svg>
<svg style="position:absolute;left:0px;top:0px;" width="1" height="1" viewBox="0 0 1 1"><circle cx="963.8" cy="266" r="5.2" fill="none" stroke="#555" stroke-width="1.3"/><path d="M967.6,269.8 L971.3,273.5" stroke="#555" stroke-width="1.4" stroke-linecap="round"/></svg>
<svg style="position:absolute;left:0px;top:0px;" width="1" height="1" viewBox="0 0 1 1"><circle cx="373" cy="351" r="8.3" fill="none" stroke="#1877e0" stroke-width="1.6"/><path d="M373,347.4 V354.6 M369.4,351 H376.6" stroke="#1877e0" stroke-width="1.9" stroke-linecap="butt"/></svg>
<svg style="position:absolute;left:0px;top:0px;" width="1" height="1" viewBox="0 0 1 1"><g fill="none" stroke="#1fc08a" stroke-width="1.8" stroke-linecap="butt" stroke-linejoin="miter"><path d="M393.2,351.2 A9,9 0 0 1 409.9,346.7"/><path d="M409.8,341.3 V346.3 H404.9"/><path d="M411.2,351.2 A9,9 0 0 1 394.4,355.7"/><path d="M393.9,361 V356.3 H398.8"/></g></svg>
<svg style="position:absolute;left:0px;top:0px;" width="1" height="1" viewBox="0 0 1 1"><path d="M338.5,370.8 H351.7 A0.9,0.9 0 0 1 352.4,372.3 L346.8,378.6 V384.3 A0.8,0.8 0 0 1 346.3,385 L344.1,385.8 A0.6,0.6 0 0 1 343.4,385.2 V378.6 L337.8,372.3 A0.9,0.9 0 0 1 338.5,370.8 Z" fill="none" stroke="#555" stroke-width="1.35" stroke-linejoin="round"/></svg>
<svg style="position:absolute;left:0px;top:0px;" width="1" height="1" viewBox="0 0 1 1"><path d="M320.3,854.5 L315.5,859.3 L320.3,864.1" fill="none" stroke="#a8a8a8" stroke-width="1.4" stroke-linecap="round" stroke-linejoin="round"/><path d="M328.6,854.5 L323.8,859.3 L328.6,864.1" fill="none" stroke="#a8a8a8" stroke-width="1.4" stroke-linecap="round" stroke-linejoin="round"/></svg>
<svg style="position:absolute;left:0px;top:0px;" width="1" height="1" viewBox="0 0 1 1"><path d="M358.3,854.5 L353.5,859.3 L358.3,864.1" fill="none" stroke="#a8a8a8" stroke-width="1.4" stroke-linecap="round" stroke-linejoin="round"/></svg>
<svg style="position:absolute;left:0px;top:0px;" width="1" height="1" viewBox="0 0 1 1"><path d="M476.5,854.5 L481.3,859.3 L476.5,864.1" fill="none" stroke="#a8a8a8" stroke-width="1.4" stroke-linecap="round" stroke-linejoin="round"/></svg>
<svg style="position:absolute;left:0px;top:0px;" width="1" height="1" viewBox="0 0 1 1"><path d="M506.5,854.5 L511.3,859.3 L506.5,864.1" fill="none" stroke="#a8a8a8" stroke-width="1.4" stroke-linecap="round" stroke-linejoin="round"/><path d="M514.5,854.5 L519.3,859.3 L514.5,864.1" fill="none" stroke="#a8a8a8" stroke-width="1.4" stroke-linecap="round" stroke-linejoin="round"/></svg>
<div style="position:absolute;left:280px;top:909px;width:45px;height:38px;border:3px solid #ff0000;border-radius:1.5px;box-sizing:border-box;"></div>
<svg style="position:absolute;left:0px;top:0px;" width="1" height="1" viewBox="0 0 1 1"><g fill="none" stroke="#1fbf88" stroke-width="1.7" stroke-linejoin="round"><path d="M298.5,918.9 H309.5 L314,923.4 V934.6 A3.3,3.3 0 0 1 310.7,937.9 H298.5 A3.3,3.3 0 0 1 295.2,934.6 V922.2 A3.3,3.3 0 0 1 298.5,918.9 Z"/><path d="M299.6,919 V921.2 A2.4,2.4 0 0 0 302,923.6 H306.8 A2.4,2.4 0 0 0 309.2,921.2 V919"/><circle cx="304.4" cy="930.2" r="2.6"/></g></svg>
<svg style="position:absolute;left:0px;top:0px;" width="1" height="1" viewBox="0 0 1 1"><circle cx="346" cy="928" r="10.2" fill="none" stroke="#1877e0" stroke-width="1.7"/><path d="M341.8,928.4 L344.8,931.3 L350.3,925.4" fill="none" stroke="#1877e0" stroke-width="1.7" stroke-linecap="round" stroke-linejoin="round"/></svg>
<svg style="position:absolute;left:0px;top:0px;" width="1" height="1" viewBox="0 0 1 1"><circle cx="387" cy="928" r="10.2" fill="none" stroke="#1c2430" stroke-width="1.8"/><path d="M387,923.2 V932.8 M382.2,928 H391.8" stroke="#1c2430" stroke-width="1.9" stroke-linecap="round"/></svg>
<svg style="position:absolute;left:0px;top:0px;" width="1" height="1" viewBox="0 0 1 1"><g fill="none" stroke="#ffaab0" stroke-width="1.7" stroke-linecap="round" stroke-linejoin="round"><path d="M421.6,922.5 H437.4"/><path d="M425.5,922.2 V920.6 A1.8,1.8 0 0 1 427.3,918.8 H431.7 A1.8,1.8 0 0 1 433.5,920.6 V922.2"/><path d="M423.3,922.8 V935.8 A2.6,2.6 0 0 0 425.9,938.4 H433.1 A2.6,2.6 0 0 0 435.7,935.8 V922.8"/><path d="M427.6,927.5 V934 M431.4,927.5 V934"/></g></svg>
<svg style="position:absolute;left:0px;top:0px;" width="1" height="1" viewBox="0 0 1 1"><defs><clipPath id="asc"><path d="M1853.2,950 V929 A20.5,20.5 0 1 1 1873.7,949.5 Z"/></clipPath><linearGradient id="hair" x1="0" y1="0" x2="1" y2="0"><stop offset="0" stop-color="#4a3026"/><stop offset="0.5" stop-color="#6a4a3c"/><stop offset="1" stop-color="#3e2820"/></linearGradient></defs><path d="M1853.2,950 V929 A20.5,20.5 0 1 1 1873.7,949.5 Z" fill="#c9e5fb"/><g clip-path="url(#asc)"><path d="M1858,951 C1856,940 1856,925 1858.5,917 C1861,909 1868,908 1874,909 C1882,910 1885,916 1886,924 C1887,932 1888,942 1889,951 Z" fill="url(#hair)"/><ellipse cx="1871.6" cy="926.5" rx="7.8" ry="10.8" fill="#e2b39c"/><path d="M1862.5,921 C1864,913 1870,911 1875,911.5 C1879,912 1881,915 1882,919 C1878,915 1870,914.5 1866,917 Z" fill="#54362a"/><rect x="1861.8" y="919.5" width="7.6" height="6" rx="2.2" fill="none" stroke="#4a4a55" stroke-width="1.2"/><rect x="1871.6" y="919.5" width="7.6" height="6" rx="2.2" fill="none" stroke="#4a4a55" stroke-width="1.2"/><path d="M1867.6,930.5 Q1872,934 1876.4,930 Q1872,931.8 1867.6,930.5 Z" fill="#fff" stroke="#c83a3a" stroke-width="1"/><path d="M1856,952 C1858,944 1863,941.5 1870,941.5 C1877,941.5 1883,944 1886,952 Z" fill="#e9e6e2"/></g><path d="M1853.2,950 V929 A20.5,20.5 0 1 1 1873.7,949.5 Z" fill="none" stroke="#1877ee" stroke-width="1.9"/></svg>
<div class="t" style="left:53.00px;top:66.2px;font-size:14px;line-height:14px;font-weight:400;color:#b5b8bd;letter-spacing:0.292px;transform:scaleX(1.0718);transform-origin:0 0;">O que você procura?</div>
<div class="t" style="left:59.40px;top:99.1px;font-size:14px;line-height:14px;font-weight:700;color:#0f1c2e;letter-spacing:0.272px;transform:scaleX(1.0570);transform-origin:0 0;">Cadastros</div>
<div class="t" style="left:59.40px;top:124.1px;font-size:14px;line-height:14px;font-weight:700;color:#0f1c2e;letter-spacing:0.452px;transform:scaleX(1.0809);transform-origin:0 0;">Montagem</div>
<div class="t" style="left:59.40px;top:148.9px;font-size:14px;line-height:14px;font-weight:700;color:#0f1c2e;letter-spacing:0.236px;transform:scaleX(1.0505);transform-origin:0 0;">Preparações</div>
<div class="t" style="left:59.40px;top:173.9px;font-size:14px;line-height:14px;font-weight:700;color:#0f1c2e;letter-spacing:0.377px;transform:scaleX(1.0804);transform-origin:0 0;">Importação</div>
<div class="t" style="left:59.40px;top:556.7px;font-size:14px;line-height:14px;font-weight:700;color:#0f1c2e;letter-spacing:0.249px;transform:scaleX(1.0513);transform-origin:0 0;">Demonstrações</div>
<div class="t" style="left:59.40px;top:581.5px;font-size:14px;line-height:14px;font-weight:700;color:#0f1c2e;letter-spacing:0.283px;transform:scaleX(1.0599);transform-origin:0 0;">Encerramento</div>
<div class="t" style="left:61.40px;top:204.2px;font-size:14px;line-height:14px;font-weight:700;color:#0f1c2e;letter-spacing:0.311px;transform:scaleX(1.0635);transform-origin:0 0;">Movimentações</div>
<div class="t" style="left:67.61px;top:232.2px;font-size:13px;line-height:13px;font-weight:400;color:#1b2233;letter-spacing:0.327px;transform:scaleX(1.0885);transform-origin:0 0;-webkit-text-stroke:0.15px #1b2233;">Diário</div>
<div class="t" style="left:67.65px;top:256.8px;font-size:13px;line-height:13px;font-weight:400;color:#1b2233;letter-spacing:0.258px;transform:scaleX(1.0513);transform-origin:0 0;-webkit-text-stroke:0.15px #1b2233;">Razão</div>
<div class="t" style="left:67.62px;top:280.8px;font-size:13px;line-height:13px;font-weight:400;color:#1b2233;letter-spacing:0.348px;transform:scaleX(1.0830);transform-origin:0 0;-webkit-text-stroke:0.15px #1b2233;">Lançamentos em Massa</div>
<div class="t" style="left:67.62px;top:305.7px;font-size:13px;line-height:13px;font-weight:400;color:#1b2233;letter-spacing:0.275px;transform:scaleX(1.0810);transform-origin:0 0;-webkit-text-stroke:0.15px #1b2233;">Itens Duplicados Diário</div>
<div class="t" style="left:67.63px;top:329.9px;font-size:13px;line-height:13px;font-weight:400;color:#1b2233;letter-spacing:0.277px;transform:scaleX(1.0722);transform-origin:0 0;-webkit-text-stroke:0.15px #1b2233;">Resumo do Diário</div>
<div class="t" style="left:67.64px;top:354.7px;font-size:13px;line-height:13px;font-weight:400;color:#1b2233;letter-spacing:0.254px;transform:scaleX(1.0600);transform-origin:0 0;-webkit-text-stroke:0.15px #1b2233;">Resumo do Razão</div>
<div class="t" style="left:68.70px;top:378.6px;font-size:13px;line-height:13px;font-weight:400;color:#1b2233;letter-spacing:0.233px;transform:scaleX(1.0620);transform-origin:0 0;-webkit-text-stroke:0.15px #1b2233;">Gráfico do Razão</div>
<div class="t" style="left:67.63px;top:403.5px;font-size:13px;line-height:13px;font-weight:400;color:#1b2233;letter-spacing:0.250px;transform:scaleX(1.0730);transform-origin:0 0;-webkit-text-stroke:0.15px #1b2233;">Distribuição Lucros</div>
<div class="t" style="left:68.70px;top:427.9px;font-size:13px;line-height:13px;font-weight:400;color:#1b2233;letter-spacing:0.254px;transform:scaleX(1.0689);transform-origin:0 0;-webkit-text-stroke:0.15px #1b2233;">Controle de Fornecedores</div>
<div class="t" style="left:68.70px;top:452.8px;font-size:13px;line-height:13px;font-weight:400;color:#1b2233;letter-spacing:0.258px;transform:scaleX(1.0739);transform-origin:0 0;-webkit-text-stroke:0.15px #1b2233;">Controle de Clientes</div>
<div class="t" style="left:67.60px;top:477px;font-size:13px;line-height:13px;font-weight:400;color:#1b2233;letter-spacing:0.381px;transform:scaleX(1.1034);transform-origin:0 0;-webkit-text-stroke:0.15px #1b2233;">Imobilizado</div>
<div class="t" style="left:68.70px;top:525.6px;font-size:13px;line-height:13px;font-weight:400;color:#1b2233;letter-spacing:0.308px;transform:scaleX(1.0882);transform-origin:0 0;-webkit-text-stroke:0.15px #1b2233;">Altera Conta Contábil</div>
<div class="t" style="left:77.00px;top:501.9px;font-size:13px;line-height:13px;font-weight:400;color:#1b2233;letter-spacing:0.347px;transform:scaleX(1.0865);transform-origin:0 0;-webkit-text-stroke:0.15px #1b2233;">Contratos</div>
<div class="t" style="left:314.50px;top:23px;font-size:18px;line-height:18px;font-weight:700;color:#0f1c2e;letter-spacing:0.372px;transform:scaleX(1.0629);transform-origin:0 0;">Contratos</div>
<div class="t" style="left:386.94px;top:62.900000000000006px;font-size:14px;line-height:14px;font-weight:400;color:#7b7b7b;letter-spacing:0.233px;transform:scaleX(1.0552);transform-origin:0 0;">Empresa 104 de 814</div>
<div class="t" style="left:319.40px;top:86.8px;font-size:14px;line-height:14px;font-weight:400;color:#1d2433;letter-spacing:-0.019px;transform:scaleX(0.9959);transform-origin:0 0;-webkit-text-stroke:0.3px #1d2433;">265 - EMPRESA - MAKRO EDUCA</div>
<div class="t" style="left:905.54px;top:59.099999999999994px;font-size:14px;line-height:14px;font-weight:400;color:#7a7a7a;letter-spacing:0.248px;transform:scaleX(1.0556);transform-origin:0 0;">Período</div>
<div class="t" style="left:946.40px;top:85.6px;font-size:14px;line-height:14px;font-weight:400;color:#1a2030;letter-spacing:0.323px;transform:scaleX(1.0739);transform-origin:0 0;-webkit-text-stroke:0.2px #1a2030;">01/02/2025</div>
<div class="t" style="left:1038.00px;top:85.6px;font-size:14px;line-height:14px;font-weight:400;color:#8a8a8a;letter-spacing:0.529px;transform:scaleX(1.0948);transform-origin:0 0;">até</div>
<div class="t" style="left:1072.00px;top:85.8px;font-size:14px;line-height:14px;font-weight:400;color:#1a2030;letter-spacing:0.452px;transform:scaleX(1.1016);transform-origin:0 0;-webkit-text-stroke:0.2px #1a2030;">28/02/2025</div>
<div class="t" style="left:1205.62px;top:84px;font-size:14px;line-height:14px;font-weight:400;color:#111111;letter-spacing:0.405px;transform:scaleX(1.0816);transform-origin:0 0;-webkit-text-stroke:0.38px #111111;">Mensal</div>
<div class="t" style="left:313.40px;top:188.8px;font-size:12px;line-height:12px;font-weight:700;color:#8a8a8a;letter-spacing:0.310px;transform:scaleX(1.0960);transform-origin:0 0;">Data Inicial*</div>
<div class="t" style="left:448.70px;top:188.8px;font-size:12px;line-height:12px;font-weight:700;color:#8a8a8a;letter-spacing:0.289px;transform:scaleX(1.0822);transform-origin:0 0;">Data Final*</div>
<div class="t" style="left:588.20px;top:188.8px;font-size:12px;line-height:12px;font-weight:700;color:#8a8a8a;letter-spacing:0.308px;transform:scaleX(1.0820);transform-origin:0 0;">1º Vencimento*</div>
<div class="t" style="left:751.50px;top:188.8px;font-size:12px;line-height:12px;font-weight:700;color:#8a8a8a;letter-spacing:0.363px;transform:scaleX(1.0950);transform-origin:0 0;">Dia Vencimento*</div>
<div class="t" style="left:915.00px;top:188.8px;font-size:12px;line-height:12px;font-weight:700;color:#8a8a8a;letter-spacing:0.288px;transform:scaleX(1.0685);transform-origin:0 0;">Tipo*</div>
<div class="t" style="left:1194.70px;top:188.8px;font-size:12px;line-height:12px;font-weight:700;color:#8a8a8a;letter-spacing:0.483px;transform:scaleX(1.1090);transform-origin:0 0;">Pagamento*</div>
<div class="t" style="left:313.00px;top:242.5px;font-size:12px;line-height:12px;font-weight:700;color:#8a8a8a;letter-spacing:0.257px;transform:scaleX(1.0706);transform-origin:0 0;">Descrição do Fornecedor*</div>
<div class="t" style="left:1008.30px;top:242.5px;font-size:12px;line-height:12px;font-weight:700;color:#8a8a8a;letter-spacing:0.390px;transform:scaleX(1.0996);transform-origin:0 0;">Contrato*</div>
<div class="t" style="left:1265.00px;top:242.5px;font-size:12px;line-height:12px;font-weight:700;color:#8a8a8a;letter-spacing:0.410px;transform:scaleX(1.1013);transform-origin:0 0;">Automático*</div>
<div class="t" style="left:313.40px;top:204.5px;font-size:14px;line-height:14px;font-weight:400;color:#111111;letter-spacing:0.413px;transform:scaleX(1.0933);transform-origin:0 0;">09/09/2025</div>
<div class="t" style="left:447.67px;top:204.5px;font-size:14px;line-height:14px;font-weight:400;color:#b4b4b4;letter-spacing:0.134px;transform:scaleX(1.0327);transform-origin:0 0;">Ex 01/09/2025</div>
<div class="t" style="left:587.17px;top:204.5px;font-size:14px;line-height:14px;font-weight:400;color:#b4b4b4;letter-spacing:0.140px;transform:scaleX(1.0341);transform-origin:0 0;">Ex 01/09/2025</div>
<div class="t" style="left:909.82px;top:206.1px;font-size:14px;line-height:14px;font-weight:400;color:#1b1b1b;letter-spacing:0.297px;transform:scaleX(1.0757);transform-origin:0 0;">Empréstimo de Terceiros</div>
<div class="t" style="left:1191.30px;top:206.1px;font-size:14px;line-height:14px;font-weight:400;color:#1b1b1b;letter-spacing:0.342px;transform:scaleX(1.0745);transform-origin:0 0;">Acumula Tudo</div>
<div class="t" style="left:311.32px;top:259.9px;font-size:14px;line-height:14px;font-weight:400;color:#b8b8b8;letter-spacing:0.314px;transform:scaleX(1.0841);transform-origin:0 0;">Digite o Nome/Cnpj/Inscr. Estadual/Cidade/Uf do Fornecedor</div>
<div class="t" style="left:310.60px;top:309.3px;font-size:14px;line-height:14px;font-weight:400;color:#1f2a37;letter-spacing:0.313px;transform:scaleX(1.0723);transform-origin:0 0;-webkit-text-stroke:0.3px #1f2a37;">Valores</div>
<div class="t" style="left:381.72px;top:309.3px;font-size:14px;line-height:14px;font-weight:400;color:#1f2a37;letter-spacing:0.309px;transform:scaleX(1.0775);transform-origin:0 0;-webkit-text-stroke:0.3px #1f2a37;">Emp./Financ. (CP)</div>
<div class="t" style="left:530.33px;top:309.3px;font-size:14px;line-height:14px;font-weight:400;color:#1f2a37;letter-spacing:0.253px;transform:scaleX(1.0652);transform-origin:0 0;-webkit-text-stroke:0.3px #1f2a37;">Emp./Financ. (LP)</div>
<div class="t" style="left:673.36px;top:309.3px;font-size:14px;line-height:14px;font-weight:400;color:#1f2a37;letter-spacing:0.167px;transform:scaleX(1.0444);transform-origin:0 0;-webkit-text-stroke:0.3px #1f2a37;">Receita e Desp. Fixa</div>
<div class="t" style="left:833.20px;top:309.3px;font-size:14px;line-height:14px;font-weight:400;color:#1f2a37;letter-spacing:0.108px;transform:scaleX(1.0278);transform-origin:0 0;-webkit-text-stroke:0.3px #1f2a37;">Aluguel PF e PJ</div>
<div class="t" style="left:955.72px;top:309.3px;font-size:14px;line-height:14px;font-weight:400;color:#1f2a37;letter-spacing:0.379px;transform:scaleX(1.0825);transform-origin:0 0;-webkit-text-stroke:0.3px #1f2a37;">Descontos</div>
<div class="t" style="left:1050.00px;top:309.3px;font-size:14px;line-height:14px;font-weight:700;color:#ffffff;letter-spacing:0.159px;transform:scaleX(1.0351);transform-origin:0 0;">Parcelas</div>
<div class="t" style="left:1130.80px;top:309.3px;font-size:14px;line-height:14px;font-weight:400;color:#1f2a37;letter-spacing:0.208px;transform:scaleX(1.0456);transform-origin:0 0;-webkit-text-stroke:0.3px #1f2a37;">Gerais</div>
<div class="t" style="left:1195.80px;top:309.3px;font-size:14px;line-height:14px;font-weight:400;color:#1f2a37;letter-spacing:0.354px;transform:scaleX(1.0750);transform-origin:0 0;-webkit-text-stroke:0.3px #1f2a37;">Observação</div>
<div class="t" style="left:1303.70px;top:309.3px;font-size:14px;line-height:14px;font-weight:400;color:#1f2a37;letter-spacing:0.343px;transform:scaleX(1.0874);transform-origin:0 0;-webkit-text-stroke:0.3px #1f2a37;">Auditoria</div>
<div class="t" style="left:420.23px;top:343.2px;font-size:14px;line-height:14px;font-weight:400;color:#2a3140;letter-spacing:0.290px;transform:scaleX(1.0674);transform-origin:0 0;">Parc.</div>
<div class="t" style="left:468.90px;top:343.2px;font-size:14px;line-height:14px;font-weight:400;color:#2a3140;letter-spacing:0.413px;transform:scaleX(1.0896);transform-origin:0 0;">Vencimento</div>
<div class="t" style="left:599.50px;top:343.2px;font-size:14px;line-height:14px;font-weight:400;color:#2a3140;letter-spacing:0.489px;transform:scaleX(1.0972);transform-origin:0 0;">Pagamento</div>
<div class="t" style="left:732.90px;top:343.2px;font-size:14px;line-height:14px;font-weight:400;color:#2a3140;letter-spacing:0.414px;transform:scaleX(1.0783);transform-origin:0 0;">Conta</div>
<div class="t" style="left:831.80px;top:343.2px;font-size:14px;line-height:14px;font-weight:400;color:#2a3140;letter-spacing:0.184px;transform:scaleX(1.0459);transform-origin:0 0;">Vr. Pagar</div>
<div class="t" style="left:997.30px;top:343.2px;font-size:14px;line-height:14px;font-weight:400;color:#2a3140;letter-spacing:0.152px;transform:scaleX(1.0404);transform-origin:0 0;">Vr. Juros</div>
<div class="t" style="left:1162.20px;top:343.2px;font-size:14px;line-height:14px;font-weight:400;color:#2a3140;letter-spacing:0.258px;transform:scaleX(1.0647);transform-origin:0 0;">Vr. Acrescimos</div>
<div class="t" style="left:1360.00px;top:343.2px;font-size:14px;line-height:14px;font-weight:400;color:#2a3140;letter-spacing:0.221px;transform:scaleX(1.0551);transform-origin:0 0;">Vr. Descontos</div>
<div class="t" style="left:1558.60px;top:343.2px;font-size:14px;line-height:14px;font-weight:400;color:#2a3140;letter-spacing:0.055px;transform:scaleX(1.0188);transform-origin:0 0;">Vr. Irrf</div>
<div class="t" style="left:1723.60px;top:343.2px;font-size:14px;line-height:14px;font-weight:400;color:#2a3140;letter-spacing:0.225px;transform:scaleX(1.0647);transform-origin:0 0;">Vr. Total</div>
<div class="t" style="left:400.50px;top:852px;font-size:14px;line-height:14px;font-weight:400;color:#1a2030;">0</div>
<div class="t" style="left:452.40px;top:852.6px;font-size:14px;line-height:14px;font-weight:400;color:#1a2030;">0</div>
<div class="t" style="left:954.20px;top:847.4px;font-size:14px;line-height:14px;font-weight:400;color:#1f2633;letter-spacing:0.098px;transform:scaleX(1.0196);transform-origin:0 0;">0,00</div>
<div class="t" style="left:1118.00px;top:847.4px;font-size:14px;line-height:14px;font-weight:400;color:#1f2633;letter-spacing:0.098px;transform:scaleX(1.0196);transform-origin:0 0;">0,00</div>
<div class="t" style="left:1314.20px;top:847.4px;font-size:14px;line-height:14px;font-weight:400;color:#1f2633;letter-spacing:0.098px;transform:scaleX(1.0196);transform-origin:0 0;">0,00</div>
<div class="t" style="left:1511.00px;top:847.4px;font-size:14px;line-height:14px;font-weight:400;color:#1f2633;letter-spacing:0.098px;transform:scaleX(1.0196);transform-origin:0 0;">0,00</div>
<div class="t" style="left:1674.30px;top:847.4px;font-size:14px;line-height:14px;font-weight:400;color:#1f2633;letter-spacing:0.098px;transform:scaleX(1.0196);transform-origin:0 0;">0,00</div>
<div class="t" style="left:1838.00px;top:847.4px;font-size:14px;line-height:14px;font-weight:400;color:#1f2633;letter-spacing:0.098px;transform:scaleX(1.0196);transform-origin:0 0;">0,00</div>
</body></html>
